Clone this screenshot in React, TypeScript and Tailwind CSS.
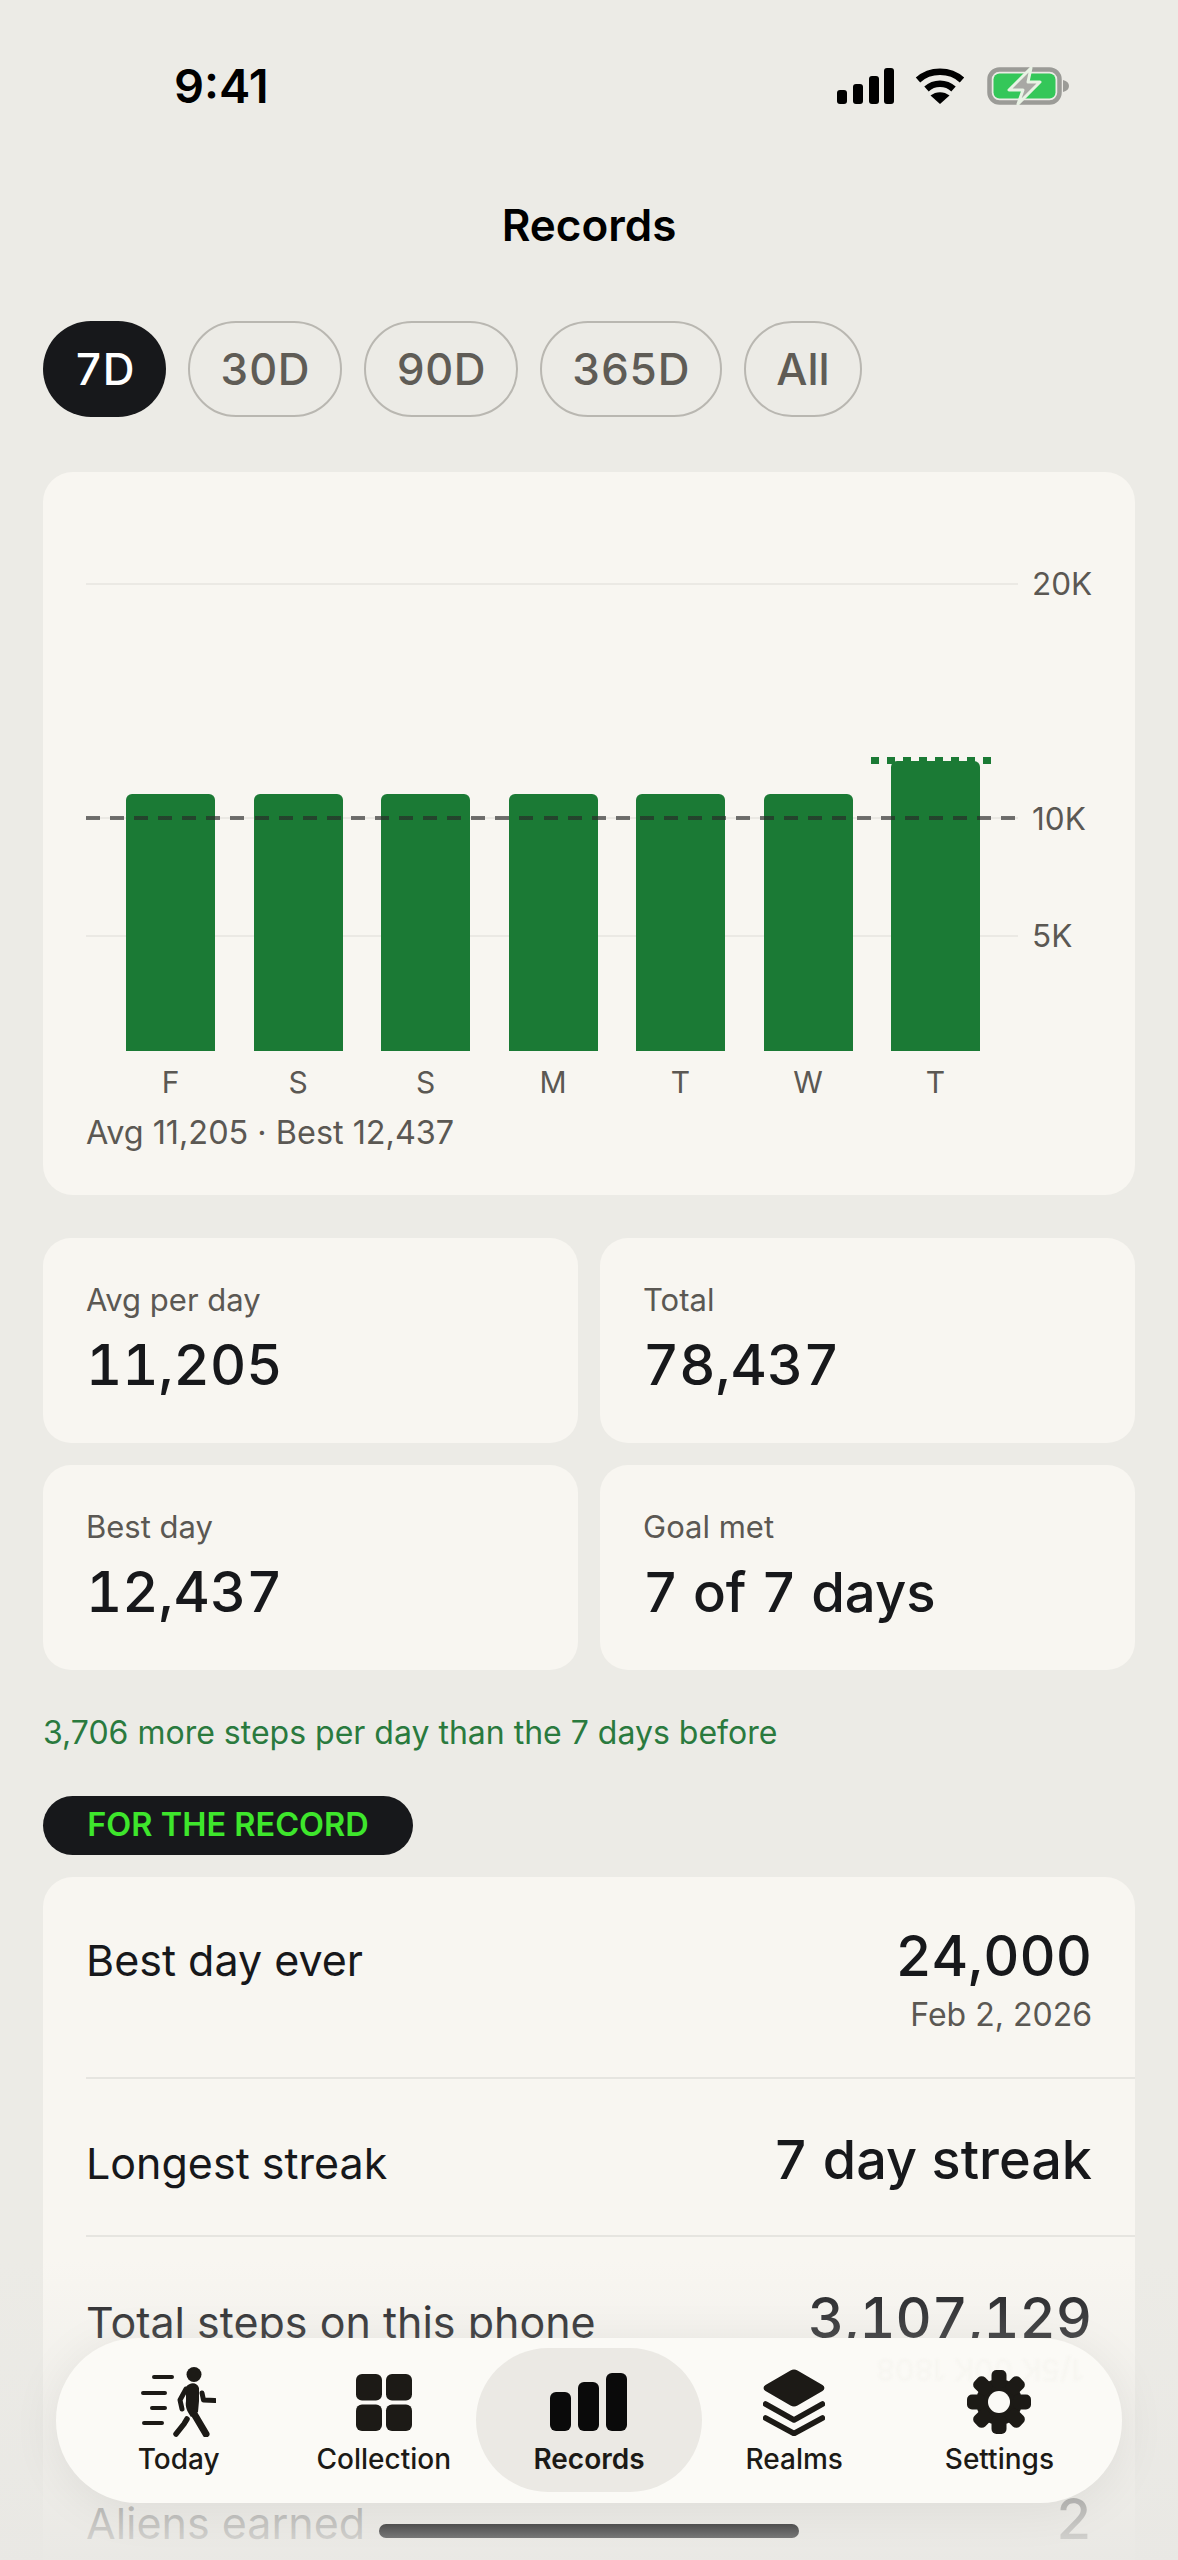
const bars = [
  { day: 'F', height: 'h-[257px]' },
  { day: 'S', height: 'h-[257px]' },
  { day: 'S', height: 'h-[257px]' },
  { day: 'M', height: 'h-[257px]' },
  { day: 'T', height: 'h-[257px]' },
  { day: 'W', height: 'h-[257px]' },
  { day: 'T', height: 'h-[290px]', best: true },
]

const stats = [
  { label: 'Avg per day', value: '11,205', size: 'text-[56px]' },
  { label: 'Total', value: '78,437', size: 'text-[56px]' },
  { label: 'Best day', value: '12,437', size: 'text-[56px]' },
  { label: 'Goal met', value: '7 of 7 days', size: 'text-[54.5px]' },
]

function StatusIcons() {
  return (
    <div className="flex items-center">
      <svg width="57" height="36" viewBox="0 0 57 36" fill="#000">
        <rect x="0" y="22" width="10" height="14" rx="3" />
        <rect x="16" y="16" width="10" height="20" rx="3" />
        <rect x="32" y="8" width="10" height="28" rx="3" />
        <rect x="47" y="0" width="10" height="36" rx="3" />
      </svg>
      <svg className="ml-[21px]" width="50" height="36" viewBox="0 0 50 36" fill="none">
        <path d="M3 12 C15 1 35 1 47 12" stroke="#000" strokeWidth="6.5" />
        <path d="M11.5 21 C19 14 31 14 38.5 21" stroke="#000" strokeWidth="6.5" />
        <path d="M25 36 L15.5 27.5 C21 23 29 23 34.5 27.5 Z" fill="#000" />
      </svg>
      <svg className="ml-[22px]" width="82" height="38" viewBox="0 0 82 38" fill="none">
        <rect x="2.5" y="2.5" width="70" height="33" rx="10" stroke="#9b9b97" strokeWidth="4.5" />
        <rect x="6.5" y="6.5" width="62" height="25" rx="6" fill="#34c759" />
        <path d="M76 13 C80 14 82 16 82 19 C82 22 80 24 76 25 Z" fill="#9b9b97" />
        <path d="M44 1 L22 23 L36 23 L31 37 L53 15 L41 15 Z" fill="#a8a8a4" stroke="#e8f2e4" strokeWidth="3" strokeLinejoin="round" />
      </svg>
    </div>
  )
}

function TodayIcon() {
  return (
    <svg width="75" height="70" viewBox="0 0 75 70" fill="none" stroke="#1c1a16" strokeLinecap="round">
      <path d="M13 10 H31 M2 26 H24 M11 41 H24 M3 56 H21" strokeWidth="4" />
      <circle cx="53" cy="7.5" r="7.5" fill="#1c1a16" stroke="none" />
      <path d="M45 20 C49 15 56 15 58 21 L58 34 L57 45 L50 50 C46 44 44 40 45 34 Z" fill="#1c1a16" stroke="none" />
      <path d="M45 22 L39 33 L41 42" strokeWidth="5" strokeLinejoin="round" />
      <path d="M61 26 L62.5 33 L74 33.5" strokeWidth="5" strokeLinejoin="round" />
      <path d="M52 45 L65 67" strokeWidth="7" />
      <path d="M46 52 L43 57 L35 67" strokeWidth="5.5" />
    </svg>
  )
}

function CollectionIcon() {
  return (
    <svg width="56" height="57" viewBox="0 0 56 57" fill="#1c1a16">
      <rect x="0" y="0" width="26" height="26.5" rx="6" />
      <rect x="30" y="0" width="26" height="26.5" rx="6" />
      <rect x="0" y="30.5" width="26" height="26.5" rx="6" />
      <rect x="30" y="30.5" width="26" height="26.5" rx="6" />
    </svg>
  )
}

function RecordsIcon() {
  return (
    <svg width="77" height="58" viewBox="0 0 77 58" fill="#0a0a0a">
      <rect x="0" y="19" width="21" height="39" rx="6" />
      <rect x="28" y="9" width="21" height="49" rx="6" />
      <rect x="56" y="0" width="21" height="58" rx="6" />
    </svg>
  )
}

function RealmsIcon() {
  return (
    <svg width="62" height="67" viewBox="0 0 62 67" fill="none">
      <path d="M27.5 1.5 C29.5 0.3 32.5 0.3 34.5 1.5 L59.5 16 C62 17.5 62 20.5 59.5 22 L34.5 36.5 C32.5 37.7 29.5 37.7 27.5 36.5 L2.5 22 C0 20.5 0 17.5 2.5 16 Z" fill="#1c1a16" />
      <path d="M2.5 35 L31 51 L59.5 35" stroke="#1c1a16" strokeWidth="5.5" strokeLinecap="round" strokeLinejoin="round" />
      <path d="M2.5 49 L31 64.5 L59.5 49" stroke="#1c1a16" strokeWidth="5.5" strokeLinecap="round" strokeLinejoin="round" />
    </svg>
  )
}

function SettingsIcon() {
  return (
    <svg width="64" height="64" viewBox="0 0 64 64">
      <circle cx="32" cy="32" r="23" fill="#1c1a16" />
      {[0, 45, 90, 135, 180, 225, 270, 315].map((angle) => (
        <rect key={angle} x="24.5" y="0" width="15" height="18" rx="5" fill="#1c1a16" transform={`rotate(${angle} 32 32)`} />
      ))}
      <circle cx="32" cy="32" r="11" fill="#fbfaf6" />
    </svg>
  )
}

const navItems = [
  { label: 'Today', icon: <TodayIcon /> },
  { label: 'Collection', icon: <CollectionIcon /> },
  { label: 'Records', icon: <RecordsIcon />, active: true },
  { label: 'Realms', icon: <RealmsIcon /> },
  { label: 'Settings', icon: <SettingsIcon /> },
]

function Chart() {
  return (
    <div className="h-[723px] rounded-[30px] bg-[#f8f6f1] px-[43px] pt-[111px]">
      <div className="relative h-[468px]">
        <div className="absolute top-0 left-0 h-[2px] w-[932px] bg-[#ebe9e4]" />
        <div className="absolute top-[234px] left-0 h-[2px] w-[932px] bg-[#ebe9e4]" />
        <div className="absolute top-[352px] left-0 h-[2px] w-[932px] bg-[#ebe9e4]" />
        <span className="absolute top-[-18px] left-[946px] text-[31.5px] leading-[38px] text-[#5b5853]">20K</span>
        <span className="absolute top-[217px] left-[946px] text-[31.5px] leading-[38px] text-[#5b5853]">10K</span>
        <span className="absolute top-[334px] left-[946px] text-[31.5px] leading-[38px] text-[#5b5853]">5K</span>
        <div className="absolute inset-x-0 bottom-0 flex items-end gap-[38.5px] pl-[40px]">
          {bars.map((bar, i) => (
            <div key={i} className={`relative w-[89px] rounded-t-[6px] bg-[#1b7a35] ${bar.height}`}>
              {bar.best && (
                <div className="absolute top-[-4px] left-[-20px] flex gap-2">
                  {[...Array(8)].map((_, j) => (
                    <span key={j} className="h-[7px] w-2 bg-[#1b7a35]" />
                  ))}
                </div>
              )}
            </div>
          ))}
        </div>
        <div className="absolute top-[233px] left-0 h-1 w-[930px] bg-[repeating-linear-gradient(90deg,rgba(40,40,40,0.65)_0_14px,transparent_14px_24.08px)]" />
      </div>
      <div className="mt-[12px] flex gap-[38.5px] pl-[40px]">
        {bars.map((bar, i) => (
          <span key={i} className="w-[89px] text-center text-[30px] leading-[38px] text-[#5b5853]">
            {bar.day}
          </span>
        ))}
      </div>
      <p className="mt-[12px] text-[32.4px] leading-[40px] text-[#5b5853]">Avg 11,205 · Best 12,437</p>
    </div>
  )
}

export default function App() {
  return (
    <div className="relative h-[2560px] w-[1178px] overflow-hidden bg-[#ecebe6] [font-family:Inter,sans-serif] text-[#17181b]">
      <div className="flex h-[172px] items-center justify-between pl-[174px] pr-[109px]">
        <span className="text-[47px] font-semibold text-black">9:41</span>
        <StatusIcons />
      </div>
      <h1 className="flex h-[106px] items-center justify-center text-[44px] font-semibold text-black">Records</h1>

      <div className="mt-[43px] px-[43px]">
        <div className="flex gap-[22px] tabular-nums">
          <span className="flex h-[96px] w-[123px] items-center justify-center rounded-full bg-[#17181b] text-[44px] font-medium text-white">7D</span>
          <span className="flex h-[96px] w-[154px] items-center justify-center rounded-full border-2 border-[#b9b7b1] text-[44px] font-medium text-[#5f5c56]">30D</span>
          <span className="flex h-[96px] w-[154px] items-center justify-center rounded-full border-2 border-[#b9b7b1] text-[44px] font-medium text-[#5f5c56]">90D</span>
          <span className="flex h-[96px] w-[182px] items-center justify-center rounded-full border-2 border-[#b9b7b1] text-[44px] font-medium text-[#5f5c56]">365D</span>
          <span className="flex h-[96px] w-[118px] items-center justify-center rounded-full border-2 border-[#b9b7b1] text-[44px] font-medium text-[#5f5c56]">All</span>
        </div>

        <div className="mt-[55px]">
          <Chart />
        </div>

        <div className="mt-[43px] grid grid-cols-2 gap-[22px]">
          {stats.map((stat) => (
            <div key={stat.label} className="h-[205px] rounded-[28px] bg-[#f8f6f1] px-[43px] pt-[42px]">
              <p className="text-[31px] leading-[40px] text-[#5b5853]">{stat.label}</p>
              <p className={`mt-[9px] leading-[72px] font-medium tabular-nums ${stat.size}`}>{stat.value}</p>
            </div>
          ))}
        </div>

        <p className="mt-[43px] text-[32px] leading-[40px] text-[#2a7a3e]">3,706 more steps per day than the 7 days before</p>

        <div className="mt-[43px] flex h-[59px] w-[370px] items-center justify-center rounded-full bg-[#17181b] text-[32.5px] font-semibold text-[#3ee62c]">
          FOR THE RECORD
        </div>

        <div className="mt-[22px] rounded-t-[30px] bg-[#f8f6f1] pl-[43px]">
          <div className="h-[202px] border-b-2 border-[#e6e5e0] pt-[43px] pr-[43px]">
            <div className="flex items-baseline justify-between">
              <span className="text-[43px]">Best day ever</span>
              <span className="text-[56px] leading-[72px] font-medium tabular-nums">24,000</span>
            </div>
            <p className="text-right text-[32px] leading-[43px] text-[#5b5853]">Feb 2, 2026</p>
          </div>
          <div className="flex h-[158px] items-baseline justify-between border-b-2 border-[#e6e5e0] pt-[45px] pr-[43px]">
            <span className="text-[43px]">Longest streak</span>
            <span className="text-[54px] leading-[72px] font-medium tabular-nums">7 day streak</span>
          </div>
          <div className="flex h-[201px] items-baseline justify-between pt-[45px] pr-[43px]">
            <span className="text-[43px]">Total steps on this phone</span>
            <span className="text-[56px] leading-[72px] font-medium tabular-nums">3,107,129</span>
          </div>
          <div className="flex h-[158px] items-baseline justify-between pt-[45px] pr-[43px]">
            <span className="text-[43px]">Aliens earned</span>
            <span className="text-[56px] leading-[72px] font-medium tabular-nums">2</span>
          </div>
        </div>
      </div>

      {/* fade behind the tab bar */}
      <div className="absolute inset-x-0 bottom-0 h-[300px] bg-gradient-to-b from-[#ecebe6]/0 to-[#e9e8e4]/95" />

      <nav className="absolute top-[2338px] left-[56px] grid h-[165px] w-[1066px] grid-cols-5 overflow-hidden rounded-[82px] bg-[#fbfaf6] px-[20px] py-[10px] shadow-[0_6px_50px_rgba(0,0,0,0.07)]">
        <span aria-hidden="true" className="absolute top-[14px] left-[820px] rotate-180 text-[30px] leading-[36px] font-medium whitespace-nowrap text-[#f7f6f1] blur-[1px]">
          1/5K 00K 1808
        </span>
        {navItems.map((item) => (
          <div
            key={item.label}
            className={`relative flex h-[144px] flex-col items-center ${item.active ? '-mx-[10px] rounded-[72px] bg-[#ebe9e4]' : ''}`}
          >
            <div className="mt-[10px] flex h-[88px] items-center">{item.icon}</div>
            <span className={`-mt-[4px] text-[28px] leading-[34px] text-[#1c1a16] ${item.active ? 'font-semibold' : 'font-medium'}`}>
              {item.label}
            </span>
          </div>
        ))}
      </nav>

      <div className="absolute bottom-[22px] left-[379px] h-[14px] w-[420px] rounded-full bg-gradient-to-b from-[#4f4f4f] to-[#777777]" />
    </div>
  )
}
